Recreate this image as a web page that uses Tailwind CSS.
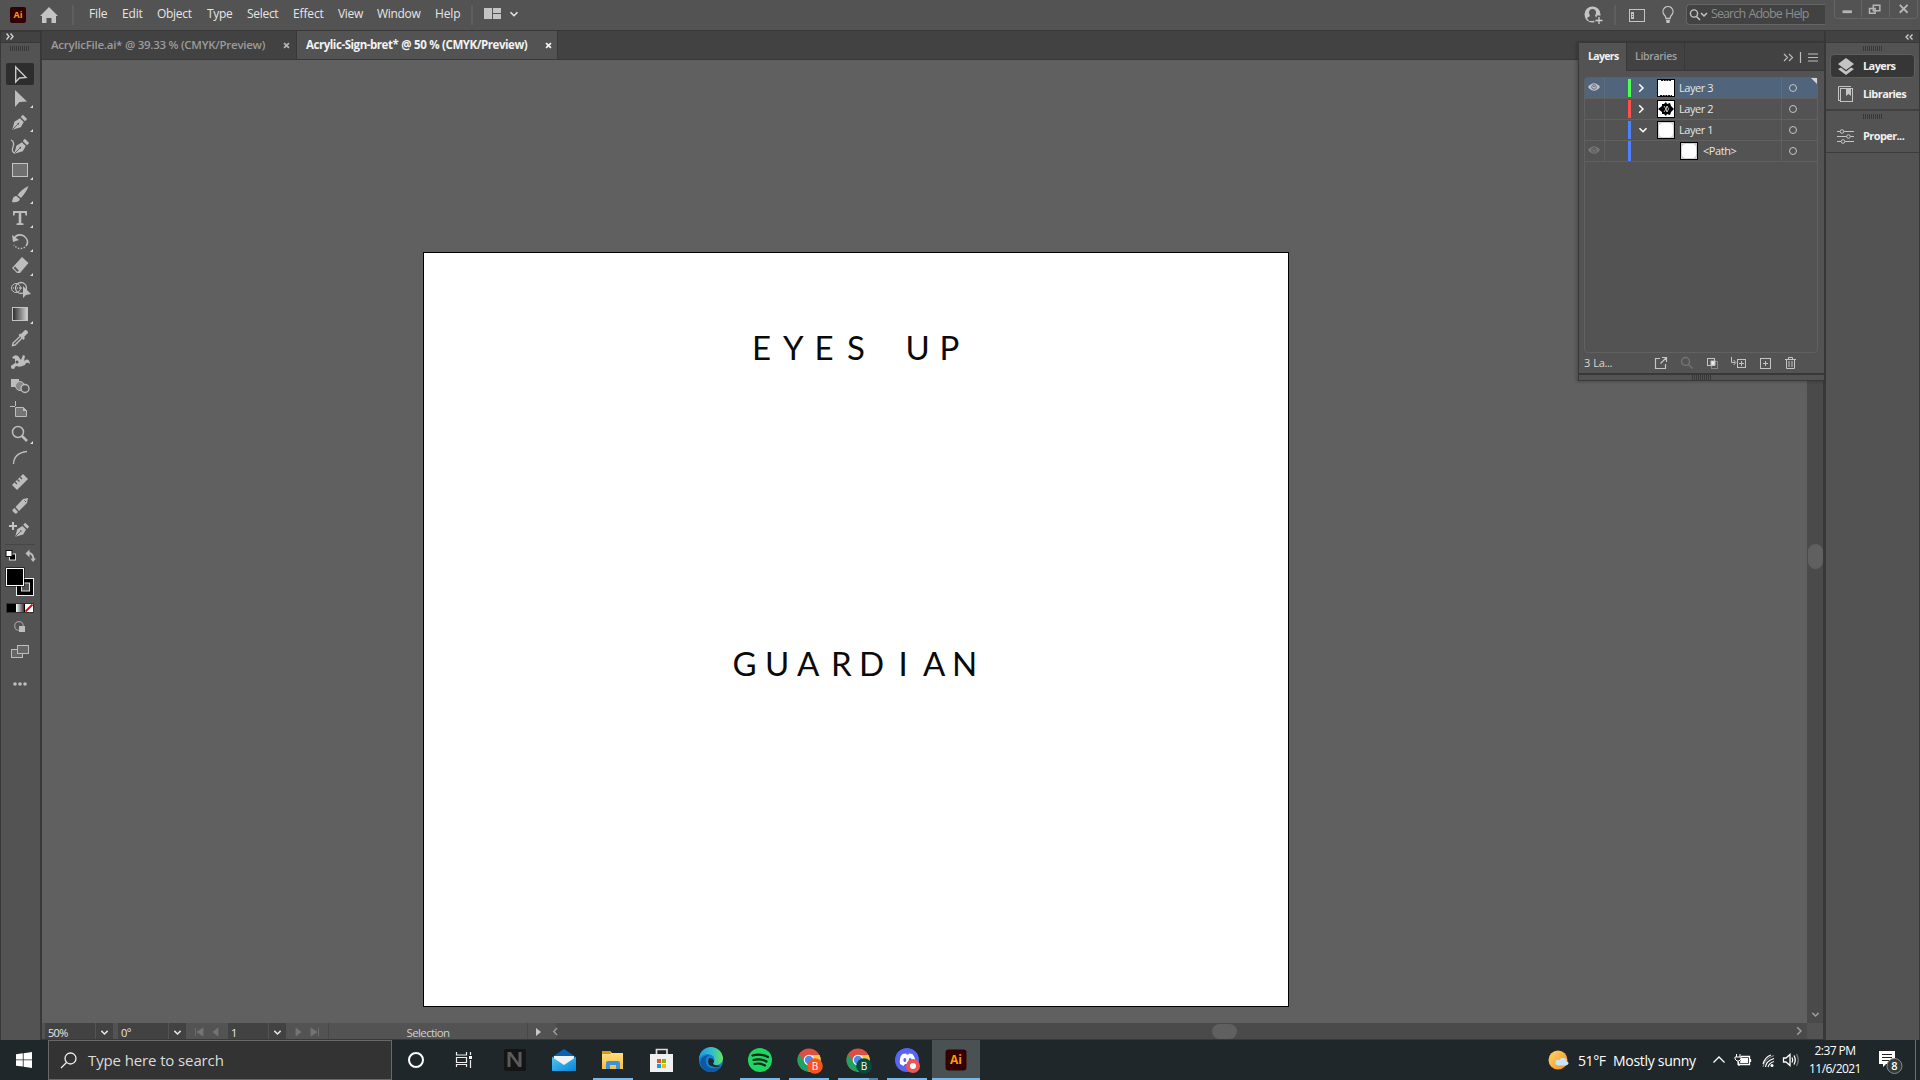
<!DOCTYPE html>
<html lang="en">
<head>
<meta charset="utf-8">
<title>Acrylic-Sign-bret</title>
<script src="https://cdn.jsdelivr.net/npm/@tailwindcss/browser@4"></script>
</head>
<body class="w-[1920px] h-[1080px] overflow-hidden bg-[#535353] font-['Open_Sans',sans-serif] text-[12px] text-[#e6e6e6] flex flex-col">
<svg class="hidden">
  <defs>
    <symbol id="down" viewBox="0 0 10 10"><path d="M1.500 3.200 5 6.700 8.500 3.200" fill="none" stroke="currentColor" stroke-width="1.600"/></symbol>
    <symbol id="right" viewBox="0 0 10 10"><path d="M3.200 1.200 7 5 3.200 8.800" fill="none" stroke="currentColor" stroke-width="1.500"/></symbol>
    <symbol id="cross" viewBox="0 0 8 8"><path d="M1.200 1.200 6.800 6.800M6.800 1.200 1.200 6.800" stroke="currentColor" stroke-width="2"/></symbol>
    <symbol id="grip" viewBox="0 0 20 5"><path d="M.5 0V5M2.500 0V5M4.500 0V5M6.500 0V5M8.500 0V5M10.500 0V5M12.500 0V5M14.500 0V5M16.500 0V5M18.500 0V5" stroke="#383838"/></symbol>
    <symbol id="nib" viewBox="0 0 20 20"><path d="M1.500 18.500 4 9 10.500 5 15 9.500 11.500 15.500Z" fill="#bdbdbd"/><path d="M11.500 3.500 14 1 19 6 16.500 8.500Z" fill="#bdbdbd"/><path d="M2 18 8 12" stroke="#535353" stroke-width="1"/><circle cx="8.600" cy="11.400" r="1" fill="#535353"/></symbol>
    <symbol id="eye" viewBox="0 0 12 8"><path d="M0 4Q6-3.500 12 4Q6 11.500 0 4Z" fill="currentColor"/><circle cx="6" cy="4" r="2.300" fill="none" stroke="#50657c" stroke-width=".9"/><circle cx="6" cy="3.500" r=".8" fill="#50657c"/></symbol>
    <symbol id="eyeoff" viewBox="0 0 12 8"><path d="M0 4Q6-3.500 12 4Q6 11.500 0 4Z" fill="currentColor"/><circle cx="6" cy="4" r="2.300" fill="none" stroke="#535353" stroke-width=".9"/><circle cx="6" cy="3.500" r=".8" fill="#535353"/></symbol>
    <symbol id="chrome" viewBox="0 0 24 24"><circle cx="12" cy="12" r="11.500" fill="#dd4f43"/><path d="M12 12H23.500A11.500 11.500 0 0 1 12 23.500Z" fill="#ffd04c"/><path d="M12 7H22.500A11.500 11.500 0 0 1 11 23.500L16 14Z" fill="#fbc940"/><path d="M2.100 6.200 8 14.500 14.500 16.500 11 23.500A11.500 11.500 0 0 1 2.100 6.200Z" fill="#1da462"/><circle cx="12" cy="12" r="5.300" fill="#fff"/><circle cx="12" cy="12" r="4.200" fill="#4c8bf5"/></symbol>
  </defs>
</svg>

<!-- Menu bar -->
<header class="h-[30px] shrink-0 flex items-start bg-[#535353]">
  <div class="ml-[10px] mt-[7px] w-4 h-4 rounded-[2px] bg-[#330000] text-[#ff9a00] font-bold text-[9px] leading-[15px] text-center">Ai</div>
  <svg class="ml-[14px] mt-[7px] w-[18px] h-4" viewBox="0 0 18 16"><path d="M9 0 18 9H16V16H11.500V11H6.500V16H2V9H0Z" fill="#c4c4c4"/></svg>
  <div class="ml-[14px] mt-[5px] w-[2px] h-5 bg-[#5e5e5e]"></div>
  <nav class="ml-[15px] flex h-[28px] items-center whitespace-nowrap tracking-[-0.15px]">
    <span class="w-[33px]">File</span><span class="w-[35px]">Edit</span><span class="w-[50px] tracking-[-0.3px]">Object</span><span class="w-[40px] tracking-[-0.3px]">Type</span><span class="w-[46px] tracking-[-0.3px]">Select</span><span class="w-[45px]">Effect</span><span class="w-[39px] tracking-[-0.3px]">View</span><span class="w-[58px] tracking-[-0.3px]">Window</span><span class="w-[37px]">Help</span>
  </nav>
  <div class="mt-[5px] -ml-px w-[2px] h-5 bg-[#5e5e5e]"></div>
  <svg class="ml-[11px] mt-2 w-[17px] h-[11px]" viewBox="0 0 17 11"><path d="M0 0H8V11H0ZM9 0H17V5H9ZM9 6H17V11H9Z" fill="#c4c4c4"/></svg>
  <svg class="ml-[8px] mt-[9px] w-[10px] h-[10px]"><use href="#down"/></svg>
  <div class="flex-1"></div>
  <svg class="mt-[6px] w-[19px] h-[19px]" viewBox="0 0 19 19"><circle cx="8.500" cy="8.500" r="8" fill="#c4c4c4"/><path d="M8.500 3a3.200 3.500 0 0 1 3 5.500q-.8 1.500 0 2 1.500.5 2 1.500L9 15H5L3 12q.7-1 2.500-1.500.800-.5 0-2a3.200 3.500 0 0 1 3-5.500" fill="#535353"/><path d="M10 14H19M14.500 9.500V18.500" stroke="#535353" stroke-width="3.500"/><path d="M11.500 14.500H18.500M15 11V18" stroke="#d0d0d0" stroke-width="1.300"/></svg>
  <div class="ml-[11px] mt-[5px] w-[2px] h-5 bg-[#5e5e5e]"></div>
  <svg class="ml-[13px] mt-[9px] w-4 h-[13px]" viewBox="0 0 16 13"><rect x=".5" y=".5" width="15" height="12" fill="none" stroke="#c4c4c4"/><path d="M2 3H5V10H2Z" fill="#c4c4c4"/><path d="M3 5.500H4M3 7.500H4" stroke="#535353"/></svg>
  <svg class="ml-[17px] mt-[6px] w-3 h-[18px]" viewBox="0 0 12 18"><path d="M4 12.500Q4 10.500 2 8.500A5 5 0 1 1 10 8.500Q8 10.500 8 12.500Z" fill="none" stroke="#c4c4c4" stroke-width="1.300"/><path d="M4 14H8L7.500 17H4.500Z" fill="#c4c4c4"/></svg>
  <div class="ml-[12px] mt-[4px] w-[139px] h-[21px] border border-r-0 border-[#656565] bg-[#424242] rounded-l flex items-center text-[#8c8c8c]">
    <svg class="ml-[2px] w-[19px] h-3" viewBox="0 0 19 12"><circle cx="5" cy="4.500" r="3.600" fill="none" stroke="#c4c4c4" stroke-width="1.400"/><path d="M7.500 7.500 11 11M12 4 15 7 18 4" fill="none" stroke="#c4c4c4" stroke-width="1.500"/></svg>
    <span class="ml-[3px] tracking-[-0.9px] [word-spacing:1px] whitespace-nowrap text-[12.500px]">Search Adobe Help</span>
  </div>
  <div class="ml-[9px] mr-[2px] w-[84px] h-[19px] border border-t-0 border-[#656565] rounded-b grid grid-cols-3 divide-x divide-[#656565] text-[#b5b5b5]">
    <svg viewBox="0 0 28 18"><path d="M8 11H18V14H8Z" fill="currentColor"/></svg>
    <svg viewBox="0 0 28 18"><path d="M12 5.500H19V11.500H12ZM8 9H14V14H8Z" fill="none" stroke="currentColor" stroke-width="1.600"/></svg>
    <svg viewBox="0 0 28 18"><path d="M10 5 18 13M18 5 10 13" stroke="currentColor" stroke-width="2"/></svg>
  </div>
</header>

<div class="h-[1010px] shrink-0 flex">
  <!-- Toolbar -->
  <aside class="w-[42px] h-full shrink-0 border-l border-r-2 border-t-2 border-[#383838] bg-[#535353] flex flex-col">
    <div class="h-[11px] shrink-0 bg-[#424242] border-b border-[#383838] pl-[5px] text-[#d0d0d0]"><svg width="8" height="7" class="mt-px" viewBox="0 0 8 7"><path d="M.5 .5 3 3.500.5 6.500M4.500.5 7 3.500 4.500 6.500" fill="none" stroke="currentColor" stroke-width="1.400"/></svg></div>
    <svg class="ml-[9px] mt-[3px] w-5 h-[5px] shrink-0"><use href="#grip"/></svg>
    <svg class="mt-[11px] w-[38px] h-[632px] shrink-0" viewBox="1 62 38 632">
      <rect x="6" y="63" width="28" height="22" rx="2" fill="#2d2d2d"/>
      <path d="M15.700 67V82L19.500 78 26 77.500Z" fill="none" stroke="#c8c8c8" stroke-width="1.400"/>
      <g fill="#bdbdbd">
        <path d="M15 90V107L19.500 102 27 101.500Z"/>
        <use href="#nib" x="11" y="114" width="17" height="17"/>
        <use href="#nib" x="13" y="138" width="17" height="17"/>
        <path d="M11 140q4 2 2 7t2 6" fill="none" stroke="#bdbdbd" stroke-width="1.300"/>
        <rect x="12.500" y="163.500" width="15" height="13" fill="#707070" stroke="#c4c4c4"/>
        <path d="M28.500 186Q27 191 21 198L17.500 195Q22 189 28.500 186"/><path d="M12 202Q13 195 16.500 196L20 199Q18.500 203 12 202"/>
        <path d="M13 211H27V215.500H25.500L25 213H21.300V223L23.500 223.500V225H16.500V223.500L18.700 223V213H15L14.500 215.500H13Z"/>
        <path d="M14 238Q18 233 24 236Q30 241 26 246" fill="none" stroke="#bdbdbd" stroke-width="1.600"/><path d="M12 235 13 242 19 240Z"/><path d="M25 247Q19 251 14 245" fill="none" stroke="#bdbdbd" stroke-width="1.500" stroke-dasharray="1.500 1.500"/>
        <path d="M22 257 28.500 263 20 273H17L12 268Z"/><path d="M15 266.500 18.800 270.500 18 271.500H17L13.700 268Z" fill="#535353"/>
        <circle cx="16" cy="288" r="4.500" fill="none" stroke="#bdbdbd"/><circle cx="21" cy="288" r="5.500" fill="none" stroke="#bdbdbd" stroke-width="1.300"/><path d="M13 288H23" stroke="#ddd" stroke-dasharray="1 1"/><path d="M23 286V298L26 295 31 294Z"/>
      </g>
      <defs><linearGradient id="g1"><stop stop-color="#2a2a2a"/><stop offset="1" stop-color="#d4d4d4"/></linearGradient><linearGradient id="g2"><stop stop-color="#fff"/><stop offset="1" stop-color="#333"/></linearGradient></defs>
      <rect x="12.500" y="307.500" width="15" height="13" fill="url(#g1)" stroke="#c4c4c4"/>
      <g fill="#bdbdbd">
        <path d="M21 334 25 330Q28 330 28 333L24 337 25 338 23.500 340 18.500 335 20 333.500Z"/><path d="M20 336.500 13 343 12.500 345.500 15 345 22 338" fill="none" stroke="#bdbdbd" stroke-width="1.400"/>
        <path d="M12 358Q14 354 18 356L21 360 23 355 25 356 24 361Q29 357 30 364Q26 361 25 365Q19 368 17 366L12 368 11 366 15 363 15 359Z"/><circle cx="17" cy="362" r="1.500" fill="#535353"/><circle cx="13" cy="367" r="2"/>
        <rect x="11" y="379" width="8" height="8"/><circle cx="20" cy="386" r="4.500" fill="#888" stroke="#bdbdbd"/><circle cx="25" cy="388.500" r="4" fill="#535353" stroke="#bdbdbd" stroke-width="1.400"/>
        <path d="M10 406.500H15M15.500 401V406M15.500 407.500V416.500H26.500V410.500L23 407.500Z" fill="none" stroke="#bdbdbd"/><path d="M16 408H23V411H26V416H16Z" fill="#757575"/><path d="M23 407 27 411H23Z"/>
        <circle cx="18" cy="432" r="5.500" fill="none" stroke="#bdbdbd" stroke-width="1.500"/><path d="M22 436 27 441" stroke="#bdbdbd" stroke-width="2.500"/>
        <path d="M13.500 464Q14 453 27 451.500" fill="none" stroke="#bdbdbd" stroke-width="1.300"/>
        <path d="M23 474 28 479 17 490 12 485Z"/><path d="M20 477 22 479M17.500 479.500 19.500 481.500M15 482 17 484" stroke="#535353" stroke-width="1.200"/>
        <path d="M28 498 27 503 19 511 15.500 507 23 499ZM14.500 508 18 512 16.500 513.500H15L12.500 511V509.500Z"/><path d="M24.500 500.500 26 502" stroke="#535353"/>
        <use href="#nib" x="14" y="522" width="16" height="16"/><path d="M9 526H17M13 522V530" stroke="#c4c4c4" stroke-width="2"/>
        <path d="M33 105V108H30ZM33 129V132H30ZM33 177V180H30ZM33 201V204H30ZM33 225V228H30ZM33 249V252H30ZM33 273V276H30ZM33 321V324H30ZM33 441V444H30Z" fill="#ddd"/>
      </g>
      <path d="M5 544.500H35" stroke="#454545"/>
      <rect x="9.500" y="554" width="6" height="6" fill="#000" stroke="#ddd"/><rect x="6" y="550.500" width="6" height="6" fill="#fff" stroke="#111"/>
      <path d="M27 553.500Q33.500 552 33.500 560" fill="none" stroke="#bdbdbd" stroke-width="2"/><path d="M29.500 549.500V557.500L25.500 553.500Z" fill="#bdbdbd"/><path d="M30.500 558.500H36L33 562Z" fill="#bdbdbd"/>
      <rect x="16.500" y="578.500" width="17" height="17" fill="#000" stroke="#eee"/><rect x="21.500" y="583" width="8" height="8" fill="#535353" stroke="#ddd"/>
      <rect x="5.500" y="567.500" width="19" height="19" fill="#000"/><rect x="6.500" y="568.500" width="17" height="17" fill="#000" stroke="#fff"/>
      <rect x="6.500" y="603.500" width="27" height="9" fill="#000" stroke="#333"/><rect x="16" y="604" width="8" height="8" fill="url(#g2)"/><rect x="25" y="604" width="8" height="8" fill="#fff"/><path d="M25.500 611.500 32.500 604.500" stroke="#f00000" stroke-width="2"/>
      <circle cx="19" cy="626" r="4.300" fill="none" stroke="#999" stroke-width="1.300"/><rect x="19" y="626" width="6" height="6" fill="#bdbdbd"/>
      <rect x="11.500" y="649.500" width="11" height="8" fill="#666" stroke="#bdbdbd"/><rect x="17.500" y="645.500" width="11" height="8" fill="#666" stroke="#bdbdbd"/>
      <g fill="#bdbdbd"><circle cx="15" cy="684" r="1.800"/><circle cx="20" cy="684" r="1.800"/><circle cx="25" cy="684" r="1.800"/></g>
    </svg>
  </aside>

  <!-- Document window -->
  <main class="relative w-[1782px] h-full flex flex-col">
    <div class="h-[30px] shrink-0 border-y border-[#383838] bg-[#424242] flex font-bold text-[11.5px] whitespace-nowrap">
      <div class="w-[255px] border-r border-[#383838] pl-[9px] pr-[6px] flex items-center justify-between text-[#9b9b9b]"><span class="font-semibold tracking-[-0.26px]">AcrylicFile.ai* @ 39.33 % (CMYK/Preview)</span><svg class="w-[7px] h-[7px] text-[#b5b5b5]"><use href="#cross"/></svg></div>
      <div class="w-[261px] bg-[#535353] border-r border-[#383838] pl-[9px] pr-[5px] flex items-center justify-between text-[#f2f2f2]"><span class="tracking-[-0.45px] [word-spacing:0.4px]">Acrylic-Sign-bret* @ 50 % (CMYK/Preview)</span><svg class="w-[7px] h-[7px]"><use href="#cross"/></svg></div>
    </div>
    <div class="flex h-[963px] shrink-0">
      <div class="w-[1765px] bg-[#606060] pt-[192px] pl-[381px]">
        <svg class="w-[866px] h-[755px]" viewBox="423 252 866 755" font-family="Lato, sans-serif" font-size="33" fill="#0a0a0a">
          <rect x="423.500" y="252.500" width="865" height="754" fill="#fff" stroke="#000"/>
          <text y="359.500" x="752 783 814.500 847 880 905.500 939.500">EYES UP</text>
          <text y="675.500" x="732.500 765 797 831 859 898.500 923 952">GUARDIAN</text>
        </svg>
      </div>
      <div class="w-[17px] bg-[#4a4a4a] border-r border-[#383838] flex flex-col items-center">
        <div class="mt-[484px] w-[15px] h-[25px] rounded-full bg-[#606060]"></div>
        <svg class="mt-[441px] w-[9px] h-[9px] text-[#9d9d9d]"><use href="#down"/></svg>
      </div>
    </div>
    <div class="h-[17px] shrink-0 bg-[#4a4a4a] border-b border-[#383838] flex items-center text-[11px] leading-[14px] whitespace-nowrap">
      <div class="h-full w-[514px] bg-[#535353] flex items-center">
        <div class="ml-[3px] pt-[3px] w-[50px] h-full bg-[#424242] pl-[3px] tracking-[-0.7px]">50%</div><div class="ml-px w-[17px] h-full bg-[#424242] flex items-center justify-center"><svg class="mt-[3px] w-[9px] h-[9px]"><use href="#down"/></svg></div>
        <div class="ml-[5px] pt-[3px] w-[50px] h-full bg-[#424242] pl-[3px] tracking-[-0.3px]">0º</div><div class="ml-px w-[17px] h-full bg-[#424242] flex items-center justify-center"><svg class="mt-[3px] w-[9px] h-[9px]"><use href="#down"/></svg></div>
        <svg class="w-[42px] h-4" viewBox="187 0 42 16"><path d="M196.500 5V13M204 5V13L198 9ZM219 5V13L214 9Z" fill="#747474" stroke="#747474" stroke-width=".8"/></svg>
        <div class="pt-[3px] w-[40px] h-full bg-[#424242] pl-[3px]">1</div><div class="ml-px w-[17px] h-full bg-[#424242] flex items-center justify-center"><svg class="mt-[3px] w-[9px] h-[9px]"><use href="#down"/></svg></div>
        <svg class="w-[42px] h-4" viewBox="287 0 42 16"><path d="M319.500 5V13M312 5V13L318 9ZM297 5V13L302 9Z" fill="#747474" stroke="#747474" stroke-width=".8"/></svg>
        <div class="w-[200px] h-full border-x border-[#474747] text-center pt-[3px] tracking-[-0.65px] text-[#cfcfcf] text-[11.500px]">Selection</div>
        <svg class="ml-[8px] mt-[2px] w-[5px] h-2" viewBox="0 0 5 8"><path d="M0 0 5 4 0 8Z" fill="#c8c8c8"/></svg>
      </div>
      <svg class="w-[9px] h-[9px] rotate-180 text-[#9d9d9d] -ml-[5px]"><use href="#right"/></svg>
      <div class="ml-[652px] w-[25px] h-[15px] rounded-full bg-[#606060]"></div>
      <svg class="ml-[557px] w-[10px] h-[10px] text-[#9d9d9d]"><use href="#right"/></svg>
      <div class="ml-auto w-[17px] h-full bg-[#535353] border-r border-[#383838]"></div>
    </div>

    <!-- Floating layers panel -->
    <section class="absolute left-[1536px] top-[11px] w-[247px] h-[340px] border-l border-t-2 border-r border-b border-[#383838] bg-[#535353] flex flex-col shadow-[-2px_1px_3px_rgba(0,0,0,0.2)] text-[11px]">
      <div class="h-[28px] shrink-0 bg-[#424242] flex font-bold tracking-[-0.4px]">
        <div class="w-[47px] bg-[#535353] flex items-center pl-[9px] text-[10.500px] text-[#f0f0f0] tracking-[-0.65px]">Layers</div>
        <div class="w-[59px] border-x border-b border-[#383838] flex items-center pl-[8px] text-[10.500px] text-[#a0a0a0] font-semibold tracking-[-0.3px]">Libraries</div>
        <div class="flex-1 border-b border-[#383838] flex items-center text-[#bdbdbd]">
          <svg class="ml-[98px] w-[38px] h-3" viewBox="0 0 38 12"><path d="M1 3 4.500 6.500 1 10M6 3 9.500 6.500 6 10M17.500 1V12M25 3H35M25 6.500H35M25 10H35" fill="none" stroke="currentColor" stroke-width="1.200"/></svg>
        </div>
      </div>
      <div class="mt-[6px] ml-[5px] w-[234px] h-[276px] shrink-0 border border-[#616161] rounded-sm tracking-[-0.45px]">
        <div class="relative h-[21px] border-b border-[#5f5f5f] bg-[#50657c] flex items-center">
          <div class="w-5 h-full border-r border-[#5f6d7c] flex items-center justify-center text-[#c4c4c4]"><svg class="mb-[2px] mr-px w-3 h-2"><use href="#eye"/></svg></div>
          <div class="w-[23px]"></div><div class="w-[3px] h-[18px] bg-[#4fff4f]"></div>
          <svg class="mb-px ml-[5px] w-[10px] h-[10px] text-white"><use href="#right"/></svg>
          <svg class="ml-[11px] w-[18px] h-[18px]" viewBox="0 0 18 18"><rect x=".5" y=".5" width="17" height="17" fill="#fff" stroke="#000"/><path d="M4 1.500H14M3 16.500H15" stroke="#111" stroke-dasharray="2 .7"/></svg>
          <span class="ml-[4px] w-[103px] h-full border-r border-[#5f6d7c] leading-[19px]">Layer 3</span>
          <div class="ml-[7px] w-2 h-2 rounded-full border border-[#c4c4c4]"></div>
          <svg class="absolute right-0 top-0 w-[6px] h-[6px]" viewBox="0 0 6 6"><path d="M0 0H6V6Z" fill="#d4d4d4"/></svg>
        </div>
        <div class="h-[21px] border-b border-[#606060] flex items-center">
          <div class="w-5 h-full border-r border-[#606060]"></div>
          <div class="w-[23px]"></div><div class="w-[3px] h-[18px] bg-[#ff4f4f]"></div>
          <svg class="mb-px ml-[5px] w-[10px] h-[10px] text-white"><use href="#right"/></svg>
          <svg class="ml-[11px] w-[18px] h-[18px]" viewBox="0 0 18 18"><rect x=".5" y=".5" width="17" height="17" fill="#fff" stroke="#000"/><path d="M1 9 5 6V4L7 4 9 2 10 4 13 3 14 6 17 9 14 12 13 15 10 14 9 16 7 14 5 14V12Z"/><path d="M7 6 9 9 7 12M10 6Q13 9 10 12Q8 9 10 6" fill="none" stroke="#eee" stroke-width=".8"/></svg>
          <span class="ml-[4px] w-[103px] h-full border-r border-[#606060] leading-[19px]">Layer 2</span>
          <div class="ml-[7px] w-2 h-2 rounded-full border border-[#c4c4c4]"></div>
        </div>
        <div class="h-[21px] border-b border-[#606060] flex items-center">
          <div class="w-5 h-full border-r border-[#606060]"></div>
          <div class="w-[23px]"></div><div class="w-[3px] h-[18px] bg-[#4f80ff]"></div>
          <svg class="mb-px ml-[7px] w-[10px] h-[10px] text-white"><use href="#down"/></svg>
          <div class="ml-[9px] w-[18px] h-[18px] border border-black bg-[#d0d0d0] p-px"><div class="w-full h-full bg-white rounded-sm"></div></div>
          <span class="ml-[4px] w-[103px] h-full border-r border-[#606060] leading-[19px]">Layer 1</span>
          <div class="ml-[7px] w-2 h-2 rounded-full border border-[#c4c4c4]"></div>
        </div>
        <div class="h-[21px] border-b border-[#606060] flex items-center">
          <div class="w-5 h-full border-r border-[#606060] flex items-center justify-center text-[#777]"><svg class="mb-[2px] mr-px w-3 h-2"><use href="#eyeoff"/></svg></div>
          <div class="w-[23px]"></div><div class="w-[3px] h-full bg-[#4f80ff]"></div>
          <div class="ml-[49px] w-[18px] h-[18px] border border-black bg-[#d0d0d0] p-px"><div class="w-full h-full bg-white rounded-sm"></div></div>
          <span class="ml-[5px] w-[79px] h-full border-r border-[#606060] leading-[20px]">&lt;Path&gt;</span>
          <div class="ml-[7px] w-2 h-2 rounded-full border border-[#c4c4c4]"></div>
        </div>
      </div>
      <div class="h-[20px] shrink-0 flex items-center">
        <span class="ml-[5px] w-[64px] tracking-[-0.4px] [word-spacing:1px] text-[11px] text-[#d8d8d8]">3 La...</span>
        <svg class="w-[160px] h-4" viewBox="1648 354 160 16" fill="none" stroke="#c4c4c4"><path d="M1660 357.500H1655.500V367.500H1665.500V363M1660.500 362.500 1666 357M1662 356.500H1666.500V361" stroke-width="1.200"/><g stroke="#737373" stroke-width="1.500"><circle cx="1685.500" cy="360.500" r="4"/><path d="M1688.500 363.500 1692.500 367.500"/></g><rect x="1711.500" y="360.500" width="6" height="7" stroke="#888"/><rect x="1707.500" y="357.500" width="7" height="7"/><rect x="1711" y="360" width="4" height="4" fill="#eee"/><rect x="1737.500" y="358.500" width="8" height="8"/><path d="M1739 362.500H1744M1741.500 360V365M1731.500 356V361.500H1735M1733.500 359 1736 361.500 1733.500 364"/><rect x="1760.500" y="357.500" width="10" height="10"/><path d="M1763 362.500H1768M1765.500 360V365M1785 358.500H1796M1788.500 358V356.500H1792.500V358M1786.500 359V367.500H1794.500V359M1789 360V366M1792 360V366"/></svg>
      </div>
      <div class="border-t-2 border-[#383838] flex-1 flex justify-center"><svg class="w-5 h-[5px]"><use href="#grip"/></svg></div>
    </section>
  </main>

  <!-- Collapsed panel dock -->
  <aside class="w-[96px] h-full border-l-2 border-r border-t border-[#383838] bg-[#535353] font-bold text-[11px] tracking-[-0.6px] text-[#f0f0f0]">
    <div class="h-[12px] bg-[#424242] border-b border-[#383838] flex justify-end pr-[6px] pt-[3px]"><svg class="w-[8px] h-[6px]" viewBox="0 0 8 6"><path d="M3.500 .5 1 3 3.500 5.500M7.500.5 5 3 7.500 5.500" fill="none" stroke="#d0d0d0" stroke-width="1.300"/></svg></div>
    <svg class="ml-[37px] mt-[3px] w-5 h-[5px]"><use href="#grip"/></svg>
    <div class="ml-[4px] mt-[3px] w-[85px] h-[24px] rounded border border-[#5e5e5e] bg-[#363636] flex items-center">
      <svg class="ml-[7px] mt-px w-4 h-[18px]" viewBox="0 0 16 18"><path d="M8 0 16 6 8 12 0 6Z" fill="#c4c4c4"/><path d="M0 11 3 9.500 8 13.500 13 9.500 16 11 8 17Z" fill="#c4c4c4"/></svg><span class="ml-[9px] mt-px">Layers</span>
    </div>
    <div class="h-[33px] border-b-2 border-[#404040] flex items-center pl-[11px] pt-[2px]">
      <svg class="w-[17px] h-[17px]" viewBox="0 0 17 17" fill="none" stroke="#c4c4c4"><rect x="3.500" y="2.500" width="12" height="13"/><path d="M1.500 14V.5H14M1 14.500H3"/><path d="M9 3H14V10L11.500 8 9 10Z" fill="#c4c4c4" stroke="none"/></svg><span class="ml-[9px]">Libraries</span>
    </div>
    <svg class="ml-[37px] mt-[3px] w-5 h-[5px]"><use href="#grip"/></svg>
    <div class="h-[34px] border-b border-[#3c3c3c] flex items-center pl-[11px] pt-px">
      <svg class="w-[17px] h-[15px]" viewBox="0 0 17 15" fill="#535353" stroke="#c4c4c4"><path d="M0 2.500H17M0 7.500H17M0 12.500H17"/><circle cx="5" cy="2.500" r="1.800"/><circle cx="11.500" cy="7.500" r="1.800"/><circle cx="6" cy="12.500" r="1.800"/></svg><span class="ml-[9px]">Proper...</span>
    </div>
  </aside>
</div>

<!-- Taskbar -->
<footer class="relative h-[40px] shrink-0 bg-[#20272a] flex items-center text-white">
  <div class="w-12 flex justify-center"><svg class="w-4 h-4" viewBox="0 0 16 16" fill="#fff"><path d="M0 2.200 6.800 1.300V7.500H0ZM7.600 1.200 16 0V7.500H7.600ZM0 8.300H6.800V14.600L0 13.700ZM7.600 8.300H16V16L7.600 14.800Z"/></svg></div>
  <div class="w-[344px] h-full bg-[#333] border border-[#696969] flex items-center">
    <svg class="ml-[11px] w-[17px] h-[17px]" viewBox="0 0 17 17" fill="none" stroke="#eee" stroke-width="1.300"><circle cx="10.500" cy="6.500" r="5.500"/><path d="M6.500 10.500 1 16"/></svg>
    <span class="ml-[11px] text-[15px] tracking-[-0.12px] text-[#dcdcdc]">Type here to search</span>
  </div>
  <svg class="w-[588px] h-10" viewBox="392 0 588 40">
    <defs>
      <linearGradient id="mail" x2="1" y2="1"><stop stop-color="#4cc7f5"/><stop offset="1" stop-color="#0a84d8"/></linearGradient>
      <linearGradient id="fold" x2="0" y2="1"><stop stop-color="#ffe08a"/><stop offset="1" stop-color="#f7bf3c"/></linearGradient>
      <linearGradient id="edge"><stop stop-color="#1b9de2"/><stop offset=".6" stop-color="#35c1c8"/><stop offset="1" stop-color="#6be34e"/></linearGradient>
    </defs>
    <circle cx="416" cy="20" r="7" fill="none" stroke="#fff" stroke-width="2"/>
    <path d="M456.500 12V15H466.500V12M456.500 27V24.500H466.500V27M456.500 17.500H466.500V22.500H456.500ZM470.500 12V15M470.500 20V28" fill="none" stroke="#eee" stroke-width="1.200"/><rect x="469" y="16" width="3" height="3" fill="#fff"/>
    <rect x="504" y="9" width="22" height="22" rx="2" fill="#151515"/><path d="M507.500 27V12H511L518.500 22.500V12H521.500V27H518.500L510.500 16V27Z" fill="#5b5b5b"/>
    <path d="M552 17 564 9 576 17V22H552Z" fill="#0a62b5"/><path d="M554 16H574V25H554Z" fill="#f2f2f2"/><path d="M552 17 564 25 576 17V31H552Z" fill="url(#mail)"/>
    <path d="M602 11H610L612 13H623V29H602Z" fill="url(#fold)"/><path d="M602 11H610L611 14H602Z" fill="#dc9a13"/><path d="M606 29V23Q606 21 608 21H618Q620 21 620 23V29H616V25H610V29Z" fill="#3a92dd"/>
    <path d="M656.500 14V9.500H667V14" fill="none" stroke="#ddd" stroke-width="1.700"/><path d="M650 14H673V32H650Z" fill="#f0f0f0"/><path d="M657 19H661V23H657Z" fill="#f25022"/><path d="M662 19H666V23H662Z" fill="#7fba00"/><path d="M657 24H661V28H657Z" fill="#00a4ef"/><path d="M662 24H666V28H662Z" fill="#ffb900"/>
    <circle cx="711" cy="20" r="12" fill="#1580d0"/><path d="M699 19A12 12 0 0 1 723 19Q722 25 715 25Q712 24 714 22Q716 15 708 14Q702 14 699 19" fill="url(#edge)"/><path d="M706 23Q705 16 710 15Q704 15 701 19Q698 25 706 31Q715 34 720 27Q708 31 706 23" fill="#0c59a4"/><path d="M709 18Q706 25 713 26.500Q718 28 721 25.500Q718 26 714.500 25Q712 24 714 22Q714 18 709 18" fill="#20272a"/>
    <circle cx="760" cy="20" r="12" fill="#1ed760"/><path d="M752.500 15.500Q760 13 768 17M753.500 20Q760 18 766.500 21.500M754.500 24Q760 22.500 765 25.500" fill="none" stroke="#10251a" stroke-width="2.200" stroke-linecap="round"/>
    <use href="#chrome" x="797" y="8" width="24" height="24"/><circle cx="815" cy="26" r="7.800" fill="#fa541e"/><text x="815" y="29.500" font-size="10" fill="#fff" text-anchor="middle">B</text>
    <use href="#chrome" x="846" y="8" width="24" height="24"/><circle cx="864" cy="26" r="7.800" fill="#054b40"/><text x="864" y="29.500" font-size="10" fill="#fff" text-anchor="middle">B</text>
    <circle cx="907" cy="20" r="12" fill="#5865f2"/><path d="M900 24Q899 17 902.500 14L906 13.500 906.500 14.500H908.500L909 13.500 912.500 14Q916 18 915 24L911.500 26 910 24H905L903.500 26Z" fill="#fff"/><ellipse cx="904.800" cy="20" rx="1.500" ry="1.900" fill="#5865f2"/><ellipse cx="910.200" cy="20" rx="1.500" ry="1.900" fill="#5865f2"/><circle cx="913" cy="26" r="7" fill="#ed5555"/><circle cx="913" cy="26" r="3" fill="#fff"/>
    <rect x="932" y="0" width="48" height="40" fill="#4a5153"/><rect x="945.500" y="9.500" width="21" height="21" rx="3" fill="#330000"/><text x="956" y="24" font-size="12" font-weight="bold" fill="#ff9a00" text-anchor="middle">Ai</text>
    <path d="M593 38H633V40H593ZM740 38H780V40H740ZM789 38H829V40H789ZM838 38H869V40H838ZM887 38H927V40H887ZM932 38H980V40H932Z" fill="#76b9ed"/><path d="M869 38H878V40H869Z" fill="#5386ac"/>
  </svg>
  <div class="flex-1"></div>
  <svg class="w-[21px] h-5" viewBox="0 0 21 20"><defs><linearGradient id="sun" x2="1" y2="1"><stop stop-color="#ffd968"/><stop offset="1" stop-color="#f58a1c"/></linearGradient></defs><circle cx="10" cy="10" r="9.500" fill="url(#sun)"/><path d="M10 15.500Q7 15 7.500 12T11.500 10Q13 7 16 8T18.500 11Q21 12 20.500 13.500T18 15.500Z" fill="#c8e4fa"/></svg>
  <span class="ml-[9px] mt-px w-[35px] text-[14px] tracking-[-0.4px]">51°F</span>
  <span class="w-[98px] mt-px text-[14px] tracking-[-0.3px] whitespace-nowrap">Mostly sunny</span>
  <svg class="w-[94px] h-6" viewBox="1711 8 94 24" fill="none" stroke="#fff" stroke-width="1.300"><path d="M1713.500 22.500 1719 17 1724.500 22.500"/><path d="M1741 16.500H1749.500V24.500H1738.500V22M1750.500 19V22"/><path d="M1741 18H1748V23H1740Z" fill="#fff" stroke="none"/><path d="M1736.500 14V17M1740 14V17M1735 17H1741V19L1739 21H1737L1735 19ZM1738 21V25H1740" stroke-width="1"/><g stroke-width="1.100"><path d="M1763 27Q1764 19 1774 15.500" stroke="#888"/><path d="M1765.500 27Q1766 21 1774 18.500M1768 27Q1769 23 1774 21.500M1763 24Q1765 17 1771 15"/></g><circle cx="1772" cy="25.500" r="1.500" fill="#fff" stroke="none"/><path d="M1783.500 18H1786L1790 14.500V25.500L1786 22H1783.500ZM1792 17.500Q1793.500 20 1792 22.500M1794 15.500Q1796.500 20 1794 24.500"/><path d="M1796.500 14Q1800 20 1796.500 26" stroke="#777"/></svg>
  <div class="w-[60px] mr-[2px] text-center text-[12px] leading-[18px] tracking-[-0.55px] whitespace-nowrap">2:37 PM<br>11/6/2021</div>
  <svg class="ml-[12px] w-[25px] h-7" viewBox="1879 7 25 28"><path d="M1879 12H1895V25H1886L1883 28V25H1879Z" fill="#fff"/><path d="M1882 15.500H1892M1882 18.500H1892M1882 21.500H1889" stroke="#222"/><circle cx="1894.500" cy="27" r="7.500" fill="#333a3c" stroke="#888"/><text x="1894.500" y="31" font-size="11" font-weight="600" fill="#fff" text-anchor="middle">8</text></svg>
  <div class="ml-[11px] mr-1 w-px h-full bg-[#6b7072]"></div>
</footer>
</body>
</html>
